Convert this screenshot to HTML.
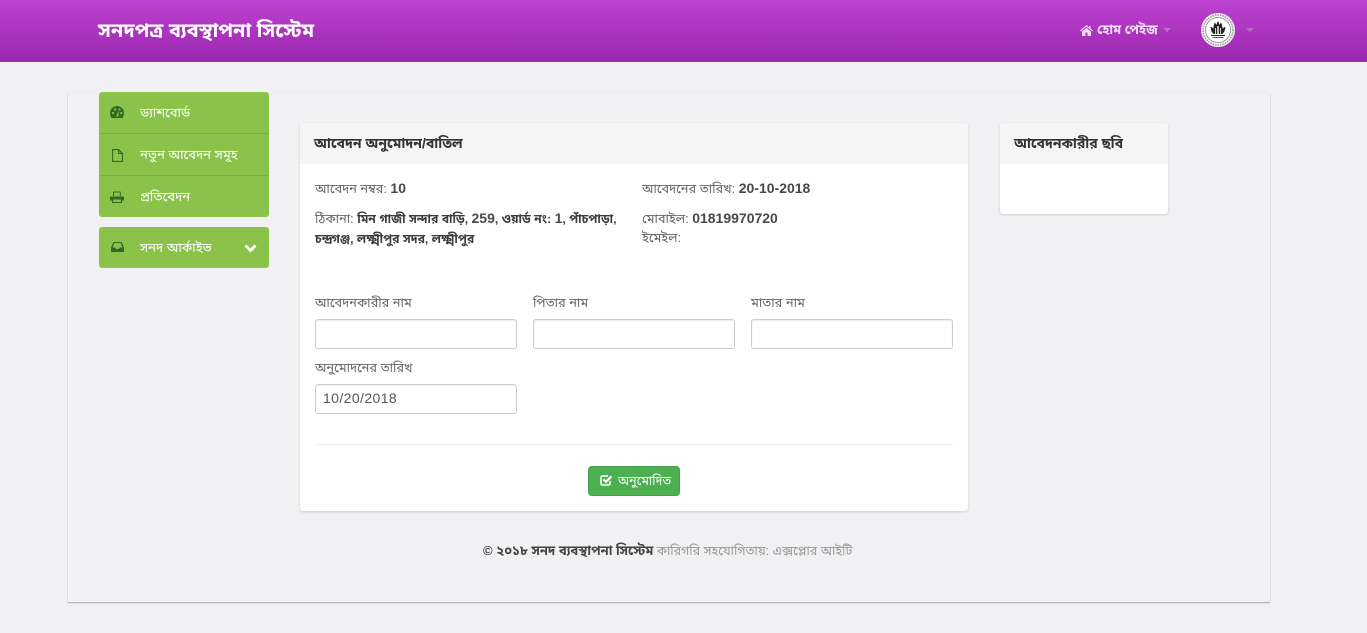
<!DOCTYPE html>
<html lang="bn">
<head>
<meta charset="utf-8">
<title>সনদপত্র ব্যবস্থাপনা সিস্টেম</title>
<style>
*{box-sizing:border-box}
html,body{margin:0;padding:0;width:1367px;height:633px;overflow:hidden}
body{background:#f1f0f2;font-family:"Liberation Sans","Noto Sans Bengali","Noto Sans CJK SC",sans-serif;font-size:14px;color:#555;position:relative}
.a{position:absolute;white-space:nowrap}
#nav{left:0;top:0;width:1367px;height:62px;background:linear-gradient(#bd42d1,#9b27af)}
#wrap{left:68px;top:93px;width:1202px;height:509px;background:#f1f0f2;box-shadow:0 1px 1px rgba(0,0,0,.28),0 0 1px rgba(0,0,0,.1)}
.menu{left:99px;width:170px;background:#8bc34a;border-radius:3px}
.menu div{height:42px;border-bottom:1px solid #7cae42}
.menu div:last-child{border-bottom:0}
.ml{left:140px;color:#fff;font-size:13px;line-height:18px}
.card{background:#fff;border-radius:3px;box-shadow:0 1px 2px rgba(0,0,0,.15)}
.head{background:#f5f5f5;height:41px;border-radius:3px 3px 0 0}
.ht{font-size:14px;color:#333;font-weight:bold;line-height:20px}
.t{font-size:12.8px;line-height:20px;color:#666}
.t b{color:#3c3c3c;font-size:12.2px}
.t b i{font-style:normal;font-size:14px;color:#484848}
.in{width:202px;height:30px;background:#fff;border:1px solid #ccc;border-radius:3px;box-shadow:inset 0 1px 1px rgba(0,0,0,.075)}
svg{position:absolute;display:block}
</style>
</head>
<body>
<div class="a" id="nav"></div>
<div class="a" style="left:98px;top:17px;font-size:20px;line-height:28px;color:#fff;font-weight:bold">সনদপত্র ব্যবস্থাপনা সিস্টেম</div>
<svg style="left:1080px;top:25px" width="13" height="11" viewBox="0 0 13 11"><path d="M6.500 0L0 5.600l.7.8L6.500 1.500l5.800 4.900.7-.8L10.500 3.500V1H9v1.200zM2 6.500V11h3.500V7.500h2V11H11V6.500L6.500 2.700z" fill="#f3dff6"/></svg>
<div class="a" style="left:1097px;top:21px;font-size:13px;line-height:18px;color:#f3dff6;font-weight:bold">হোম পেইজ</div>
<svg style="left:1163px;top:28px" width="8" height="4"><path d="M0 0h8L4 4z" fill="#b173c4"/></svg>
<svg style="left:1201px;top:13px" width="34" height="34" viewBox="0 0 34 34">
<circle cx="17" cy="17" r="17" fill="#f4f2f2"/>
<circle cx="17" cy="17" r="12.500" fill="#fff" stroke="#777" stroke-width=".7"/>
<circle cx="17" cy="17" r="15" fill="none" stroke="#999" stroke-width="1.500" stroke-dasharray="1.500 1"/>
<path d="M9.500 14c1.500 0 2.500 1 3 2 0-3 .5-5 1.500-6.500.5 1 1 1.500 1.500 2.500.3-1.500.8-3 1.500-4 .7 1 1.200 2.500 1.500 4 .5-1 1-1.500 1.500-2.500 1 1.500 1.500 3.500 1.500 6.500.5-1 1.500-2 3-2-.3 2.500-1 5-3 7H12.500c-2-2-2.700-4.500-3-7z" fill="#222"/>
<path d="M16.300 13h1.400v8h-1.400zM14 15h.8v6H14zM19.200 15h.8v6h-.8z" fill="#fff"/>
<path d="M10 22h14v1H10zM11.500 24h11v.8h-11z" fill="#222"/>
</svg>
<svg style="left:1246px;top:28px" width="8" height="4"><path d="M0 0h8L4 4z" fill="#b173c4"/></svg>

<div class="a" id="wrap"></div>

<div class="a menu" style="top:92px;height:125px"><div></div><div></div><div style="height:41px"></div></div>
<div class="a menu" style="top:227px;height:41px"></div>
<svg style="left:110px;top:106px" width="14" height="12" viewBox="0 0 14 12"><path d="M7 0a7 7 0 0 0-7 7c0 2 .6 3.500 1.500 5h11c.9-1.500 1.500-3 1.500-5a7 7 0 0 0-7-7z" fill="#2f6b22"/><circle cx="3" cy="7" r="1.100" fill="#8bc34a"/><circle cx="5" cy="3.500" r="1.100" fill="#8bc34a"/><circle cx="9.500" cy="3.500" r="1.100" fill="#8bc34a"/><circle cx="11.200" cy="7" r="1.100" fill="#8bc34a"/><path d="M6 10.500L8.500 5 8.500 10.500z" fill="#8bc34a"/></svg>
<svg style="left:112px;top:149px" width="11" height="13" viewBox="0 0 11 13"><path d="M.6.600h6l3.800 3.800v8H.6zM6.600.600v3.800h3.800" fill="none" stroke="#2f6b22" stroke-width="1.100"/></svg>
<svg style="left:110px;top:191px" width="14" height="12" viewBox="0 0 14 12"><path d="M3 .5h7.500L11 5H3zM0 5.500h14V9.500H12V12H2V9.500H0z" fill="#2f6b22"/><path d="M4 1.500h5.800V5H4zM3.200 8.500h7.600V11H3.200z" fill="#8bc34a"/></svg>
<svg style="left:111px;top:242px" width="13" height="10" viewBox="0 0 13 10"><path d="M2.500 0h8L13 5.500V10H0V5.500z" fill="#2f6b22"/><path d="M3.200 1h6.600l1.600 4.500H8.800L8 7H5l-.8-1.500H1.600z" fill="#8bc34a"/></svg>
<div class="a ml" style="top:104px">ড্যাশবোর্ড</div>
<div class="a ml" style="top:146px">নতুন আবেদন সমূহ</div>
<div class="a ml" style="top:188px">প্রতিবেদন</div>
<div class="a ml" style="top:239px">সনদ আর্কাইভ</div>
<svg style="left:244px;top:244px" width="13" height="9" viewBox="0 0 13 9"><path d="M1.500 1.500L6.500 6.500 11.500 1.500" fill="none" stroke="#fff" stroke-width="2.800"/></svg>

<div class="a card" style="left:300px;top:123px;width:668px;height:388px"><div class="head"></div></div>
<div class="a ht" style="left:314px;top:133px">আবেদন অনুমোদন/বাতিল</div>
<div class="a t" style="left:315px;top:178px">আবেদন নম্বর: <b><i>10</i></b></div>
<div class="a t" style="left:315px;top:208px">ঠিকানা: <b>মিন গাজী সন্দার বাড়ি, <i>259</i>, ওয়ার্ড নং: <i>1</i>, পাঁচপাড়া,</b></div>
<div class="a t" style="left:315px;top:229px"><b>চন্দ্রগঞ্জ, লক্ষ্মীপুর সদর, লক্ষ্মীপুর</b></div>
<div class="a t" style="left:642px;top:178px">আবেদনের তারিখ: <b><i>20-10-2018</i></b></div>
<div class="a t" style="left:642px;top:208px">মোবাইল: <b><i>01819970720</i></b></div>
<div class="a t" style="left:642px;top:228px">ইমেইল:</div>

<div class="a t" style="left:315px;top:293px">আবেদনকারীর নাম</div>
<div class="a t" style="left:533px;top:293px">পিতার নাম</div>
<div class="a t" style="left:751px;top:293px">মাতার নাম</div>
<div class="a in" style="left:315px;top:319px"></div>
<div class="a in" style="left:533px;top:319px"></div>
<div class="a in" style="left:751px;top:319px"></div>
<div class="a t" style="left:315px;top:358px">অনুমোদনের তারিখ</div>
<div class="a in" style="left:315px;top:384px;padding-left:7px;font-size:14px;letter-spacing:.4px;line-height:27px;color:#555">10/20/2018</div>
<div class="a" style="left:315px;top:444px;width:638px;height:1px;background:#eee"></div>

<div class="a" style="left:588px;top:466px;width:92px;height:30px;background:#4caf50;border:1px solid #43a047;border-radius:4px"></div>
<svg style="left:600px;top:474px" width="13" height="12" viewBox="0 0 13 12"><path d="M10 7v2.500A1.500 1.500 0 0 1 8.500 11h-6A1.500 1.500 0 0 1 1 9.500v-6A1.500 1.500 0 0 1 2.500 2H8" fill="none" stroke="#fff" stroke-width="1.500"/><path d="M3.500 5.300L6 7.800 11.500 2.300" fill="none" stroke="#fff" stroke-width="2.200"/></svg>
<div class="a" style="left:618px;top:472px;font-size:12.500px;line-height:18px;color:#fff">অনুমোদিত</div>

<div class="a card" style="left:1000px;top:123px;width:168px;height:91px"><div class="head"></div></div>
<div class="a ht" style="left:1014px;top:133px">আবেদনকারীর ছবি</div>

<div class="a" style="left:483px;top:542px;font-size:12.600px;line-height:18px;color:#999"><b style="color:#444;font-size:13px">© ২০১৮ সনদ ব্যবস্থাপনা সিস্টেম</b> কারিগরি সহযোগিতায়: এক্সপ্লোর আইটি</div>
</body>
</html>
